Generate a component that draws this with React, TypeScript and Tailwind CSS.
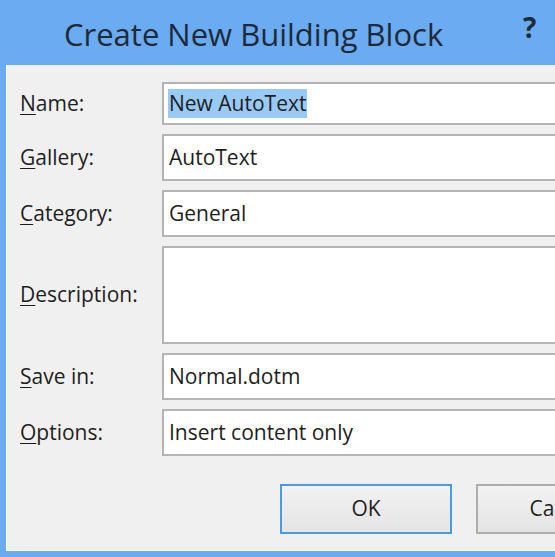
import React from 'react';

const font = { fontFamily: '"Open Sans", "Noto Sans", sans-serif' };

function Label({ k, rest }: { k: string; rest: string }) {
    return (
        <span className="text-[21px] text-[#1e1e1e]">
            <span className="underline underline-offset-[3px] decoration-1">{k}</span>
            {rest}
        </span>
    );
}

function Field({ k, rest, value, h, selected }: { k: string; rest: string; value?: string; h: string; selected?: boolean }) {
    return (
        <div className="flex items-center">
            <div className="w-[142px] shrink-0">
                <Label k={k} rest={rest} />
            </div>
            <div className={'flex items-center flex-1 border-2 border-[#b4b4b4] bg-white px-[4px] ' + h}>
                {value && (
                    <span className={'text-[21px] leading-[29px] px-[1px] text-[#1e1e1e] ' + (selected ? 'bg-[#99c9f7]' : '')}>
                        {value}
                    </span>
                )}
            </div>
        </div>
    );
}

export default function App() {
    return (
        <div style={font} className="w-[555px] h-[557px] overflow-hidden bg-[#6aabf2] flex flex-col">
            <div className="h-[65px] shrink-0 flex items-center relative">
                <span className="pl-[64px] text-[31px] text-[#1f2a38] pt-[4px] whitespace-nowrap">Create New Building Block</span>
                <span className="absolute left-[523px] top-[6px] text-[28px] font-bold text-[#1f2a38]">?</span>
            </div>
            <div className="ml-[6px] w-[600px] h-[486px] bg-[#f0f0f0] border-l border-b border-[#fafcff] pl-[13px] pt-[17px] flex flex-col">
                <div className="flex flex-col gap-[9px]">
                    <Field k="N" rest="ame:" value="New AutoText" h="h-[43px]" selected />
                    <Field k="G" rest="allery:" value="AutoText" h="h-[47px]" />
                    <Field k="C" rest="ategory:" value="General" h="h-[47px]" />
                    <Field k="D" rest="escription:" h="h-[98px]" />
                    <Field k="S" rest="ave in:" value="Normal.dotm" h="h-[47px]" />
                    <Field k="O" rest="ptions:" value="Insert content only" h="h-[47px]" />
                </div>
                <div className="flex gap-[24px] pl-[260px] mt-[28px]">
                    <button className="w-[172px] h-[50px] shrink-0 border-2 border-[#4a9be0] bg-gradient-to-b from-[#f2f2f2] to-[#e4e4e4] text-[21px] text-[#1e1e1e]">
                        OK
                    </button>
                    <button className="w-[172px] h-[50px] shrink-0 border-2 border-[#adadad] bg-gradient-to-b from-[#f2f2f2] to-[#e4e4e4] text-[21px] text-[#1e1e1e]">
                        Cancel
                    </button>
                </div>
            </div>
        </div>
    );
}
